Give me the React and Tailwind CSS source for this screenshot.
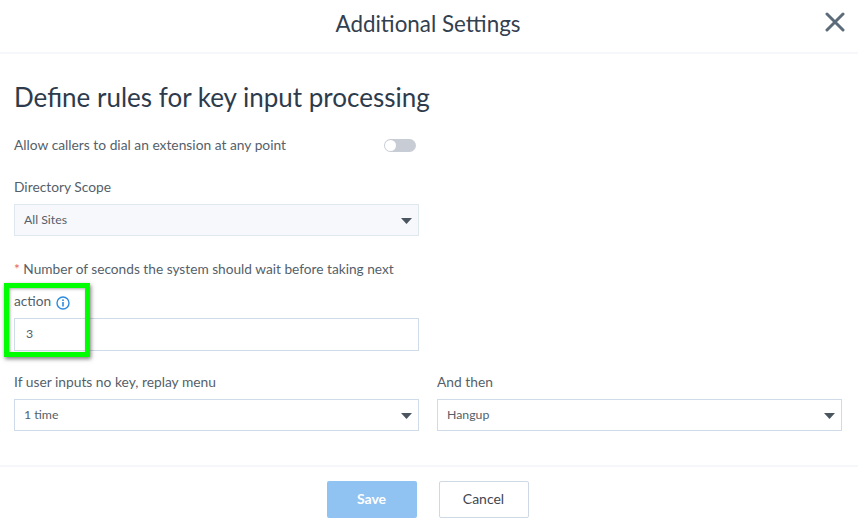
import React from "react";

const F = "font-['Lato','Noto_Sans',sans-serif]";

function Caret() {
  return (
    <svg width="11" height="6" viewBox="0 0 11 6" className="absolute right-[6px] top-[13px]">
      <path d="M0 0H11L5.5 6Z" fill="#4a5560" />
    </svg>
  );
}

function Select({ value, className }) {
  return (
    <div className={"relative flex h-[32px] items-center border border-[#cfdbe8] pl-[9px] text-[12.3px] text-[#555f6a] " + className}>
      {value}
      <Caret />
    </div>
  );
}

export default function App() {
  return (
    <div className={"relative h-[529px] w-[858px] overflow-hidden bg-white " + F}>
      <header className="relative flex h-[54px] items-center justify-center border-b-2 border-[#f6f7fb] pb-[3px] pr-[2px]">
        <h1 className="text-[22.4px] leading-none text-[#33404f]">Additional Settings</h1>
        <svg width="20" height="20" viewBox="0 0 20 20" className="absolute right-[13px] top-[12px]">
          <path d="M2 2L18 18M18 2L2 18" stroke="#5c6b79" strokeWidth="3" strokeLinecap="round" />
        </svg>
      </header>

      <main className="flex h-[413px] flex-col border-b-2 border-[#f6f7fb] px-[14px]">
        <h2 className="mt-[27px] text-[26px] leading-[32px] text-[#2d3b4c]">Define rules for key input processing</h2>

        <div className="mt-[22px] flex h-[20px] w-[402px] items-center justify-between text-[13.8px] text-[#555f6a]">
          <span>Allow callers to dial an extension at any point</span>
          <span className="flex h-[13px] w-[32px] items-center rounded-full bg-[#c8ccd4] pl-[1px]">
            <span className="h-[11px] w-[11px] rounded-full bg-white" />
          </span>
        </div>

        <label className="mt-[22px] text-[13.8px] leading-[20px] text-[#555f6a]">Directory Scope</label>
        <Select value="All Sites" className="mt-[7px] w-[405px] border-[#dfe7ef] bg-[#f6f8fb]" />

        <p className="mt-[17px] w-[405px] text-[13.7px] leading-[32px] text-[#555f6a]">
          <span className="text-[#e4605e]">* </span>Number of seconds the system should wait before taking next{" "}
          <span className="inline-flex items-center gap-[5px] align-baseline">
            action
            <svg width="14" height="14" viewBox="0 0 14 14" className="translate-y-[2px]">
              <circle cx="7" cy="7" r="6" fill="none" stroke="#2d8ae0" strokeWidth="1.4" />
              <rect x="6.2" y="6" width="1.6" height="4.5" fill="#2d8ae0" />
              <rect x="6.2" y="3.4" width="1.6" height="1.6" fill="#2d8ae0" />
            </svg>
          </span>
        </p>
        <div className="mt-[1px] flex h-[33px] w-[405px] items-center border border-[#cfdbe8] pl-[11px] text-[12.3px] text-[#555f6a]">3</div>

        <div className="mt-[21px] flex gap-[18px]">
          <div className="flex w-[405px] flex-col">
            <label className="text-[13.8px] leading-[20px] text-[#555f6a]">If user inputs no key, replay menu</label>
            <Select value="1 time" className="mt-[7px]" />
          </div>
          <div className="flex w-[405px] flex-col">
            <label className="text-[13.8px] leading-[20px] text-[#555f6a]">And then</label>
            <Select value="Hangup" className="mt-[7px]" />
          </div>
        </div>
      </main>

      <footer className="flex justify-center gap-[22px] pt-[14px] pr-[3px]">
        <button className="h-[37px] w-[90px] rounded-[2px] bg-[#90c3f2] pb-[2px] text-[14px] font-bold text-white">Save</button>
        <button className="h-[37px] w-[90px] rounded-[2px] border border-[#cfd9e6] bg-white pb-[2px] text-[14px] text-[#3f4650]">Cancel</button>
      </footer>

      <div className="absolute left-[4px] top-[283px] h-[74px] w-[86px] border-[5px] border-[#00ff00] shadow-[1px_2px_4px_rgba(0,0,0,0.5),inset_1px_1px_3px_rgba(0,0,0,0.35)]" />
    </div>
  );
}
